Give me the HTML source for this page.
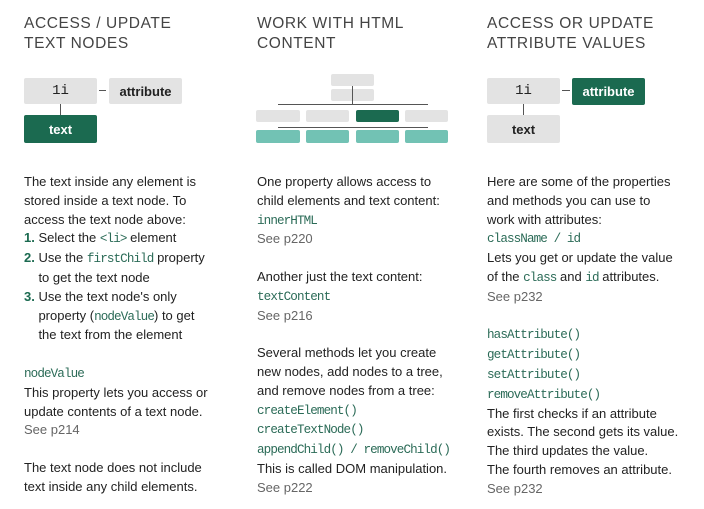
<!DOCTYPE html>
<html><head><meta charset="utf-8"><style>
*{margin:0;padding:0;box-sizing:border-box}
body{width:704px;height:509px;background:#fff;position:relative;overflow:hidden;font-family:"Liberation Sans",sans-serif;color:#222}
.h{position:absolute;top:14px;font-size:15.5px;line-height:20px;color:#444;letter-spacing:0.6px}
.b{position:absolute;background:#e3e3e3;border-radius:2px}
.g{background:#1b6a50;color:#fff}
.t{background:#72c2b4}
.lbl{display:flex;align-items:center;justify-content:center;font-size:13px;font-weight:bold}
.mono{font-family:"Liberation Mono",monospace}
.ln{position:absolute;background:#555}
.p{position:absolute;top:173px;font-size:13px;line-height:18.8px;letter-spacing:0px;color:#222}
.c{font-family:"Liberation Mono",monospace;color:#2b6b57;font-size:12.6px;letter-spacing:-0.9px}
.s{color:#666}
.n{color:#1b6a50;font-weight:bold}
</style></head><body>
<div class="h" style="left:24px">ACCESS / UPDATE<br>TEXT NODES</div>
<div class="h" style="left:257px">WORK WITH HTML<br>CONTENT</div>
<div class="h" style="left:487px">ACCESS OR UPDATE<br>ATTRIBUTE VALUES</div>

<div class="b lbl mono" style="left:24px;top:78px;width:73px;height:26px;font-weight:normal;font-size:14px">1i</div>
<div class="ln" style="left:99px;top:90px;width:7px;height:1px"></div>
<div class="b lbl" style="left:109px;top:78px;width:73px;height:26px">attribute</div>
<div class="ln" style="left:60px;top:104px;width:1px;height:11px"></div>
<div class="b g lbl" style="left:24px;top:115px;width:73px;height:28px">text</div>

<div class="b" style="left:331px;top:74px;width:43px;height:12px"></div>
<div class="b" style="left:331px;top:89px;width:43px;height:12px"></div>
<div class="ln" style="left:352px;top:86px;width:1px;height:18px"></div>
<div class="ln" style="left:278px;top:104px;width:150px;height:1px"></div>
<div class="b" style="left:256px;top:110px;width:44px;height:12px"></div>
<div class="b" style="left:306px;top:110px;width:43px;height:12px"></div>
<div class="b g" style="left:356px;top:110px;width:43px;height:12px"></div>
<div class="b" style="left:405px;top:110px;width:43px;height:12px"></div>
<div class="ln" style="left:278px;top:127px;width:150px;height:1px"></div>
<div class="b t" style="left:256px;top:130px;width:44px;height:13px"></div>
<div class="b t" style="left:306px;top:130px;width:43px;height:13px"></div>
<div class="b t" style="left:356px;top:130px;width:43px;height:13px"></div>
<div class="b t" style="left:405px;top:130px;width:43px;height:13px"></div>

<div class="b lbl mono" style="left:487px;top:78px;width:73px;height:26px;font-weight:normal;font-size:14px">1i</div>
<div class="ln" style="left:562px;top:90px;width:8px;height:1px"></div>
<div class="b g lbl" style="left:572px;top:78px;width:73px;height:27px">attribute</div>
<div class="ln" style="left:523px;top:104px;width:1px;height:11px"></div>
<div class="b lbl" style="left:487px;top:115px;width:73px;height:28px">text</div>

<div class="p" style="left:24px">The text inside any element is<br>stored inside a text node. To<br>access the text node above:<br><span class="n">1.</span> Select the <span class="c">&lt;li&gt;</span> element<br><span class="n">2.</span> Use the <span class="c">firstChild</span> property<br>&nbsp;&nbsp;&nbsp;&nbsp;to get the text node<br><span class="n">3.</span> Use the text node's only<br>&nbsp;&nbsp;&nbsp;&nbsp;property (<span class="c">nodeValue</span>) to get<br>&nbsp;&nbsp;&nbsp;&nbsp;the text from the element<br><br><span class="c">nodeValue</span><br>This property lets you access or<br>update contents of a text node.<br><span class="s">See p214</span><br><br>The text node does not include<br>text inside any child elements.</div>

<div class="p" style="left:257px">One property allows access to<br>child elements and text content:<br><span class="c">innerHTML</span><br><span class="s">See p220</span><br><br>Another just the text content:<br><span class="c">textContent</span><br><span class="s">See p216</span><br><br>Several methods let you create<br>new nodes, add nodes to a tree,<br>and remove nodes from a tree:<br><span class="c">createElement()</span><br><span class="c">createTextNode()</span><br><span class="c">appendChild() / removeChild()</span><br>This is called DOM manipulation.<br><span class="s">See p222</span></div>

<div class="p" style="left:487px">Here are some of the properties<br>and methods you can use to<br>work with attributes:<br><span class="c">className / id</span><br>Lets you get or update the value<br>of the <span class="c">class</span> and <span class="c">id</span> attributes.<br><span class="s">See p232</span><br><br><span class="c">hasAttribute()</span><br><span class="c">getAttribute()</span><br><span class="c">setAttribute()</span><br><span class="c">removeAttribute()</span><br>The first checks if an attribute<br>exists. The second gets its value.<br>The third updates the value.<br>The fourth removes an attribute.<br><span class="s">See p232</span></div>
</body></html>
